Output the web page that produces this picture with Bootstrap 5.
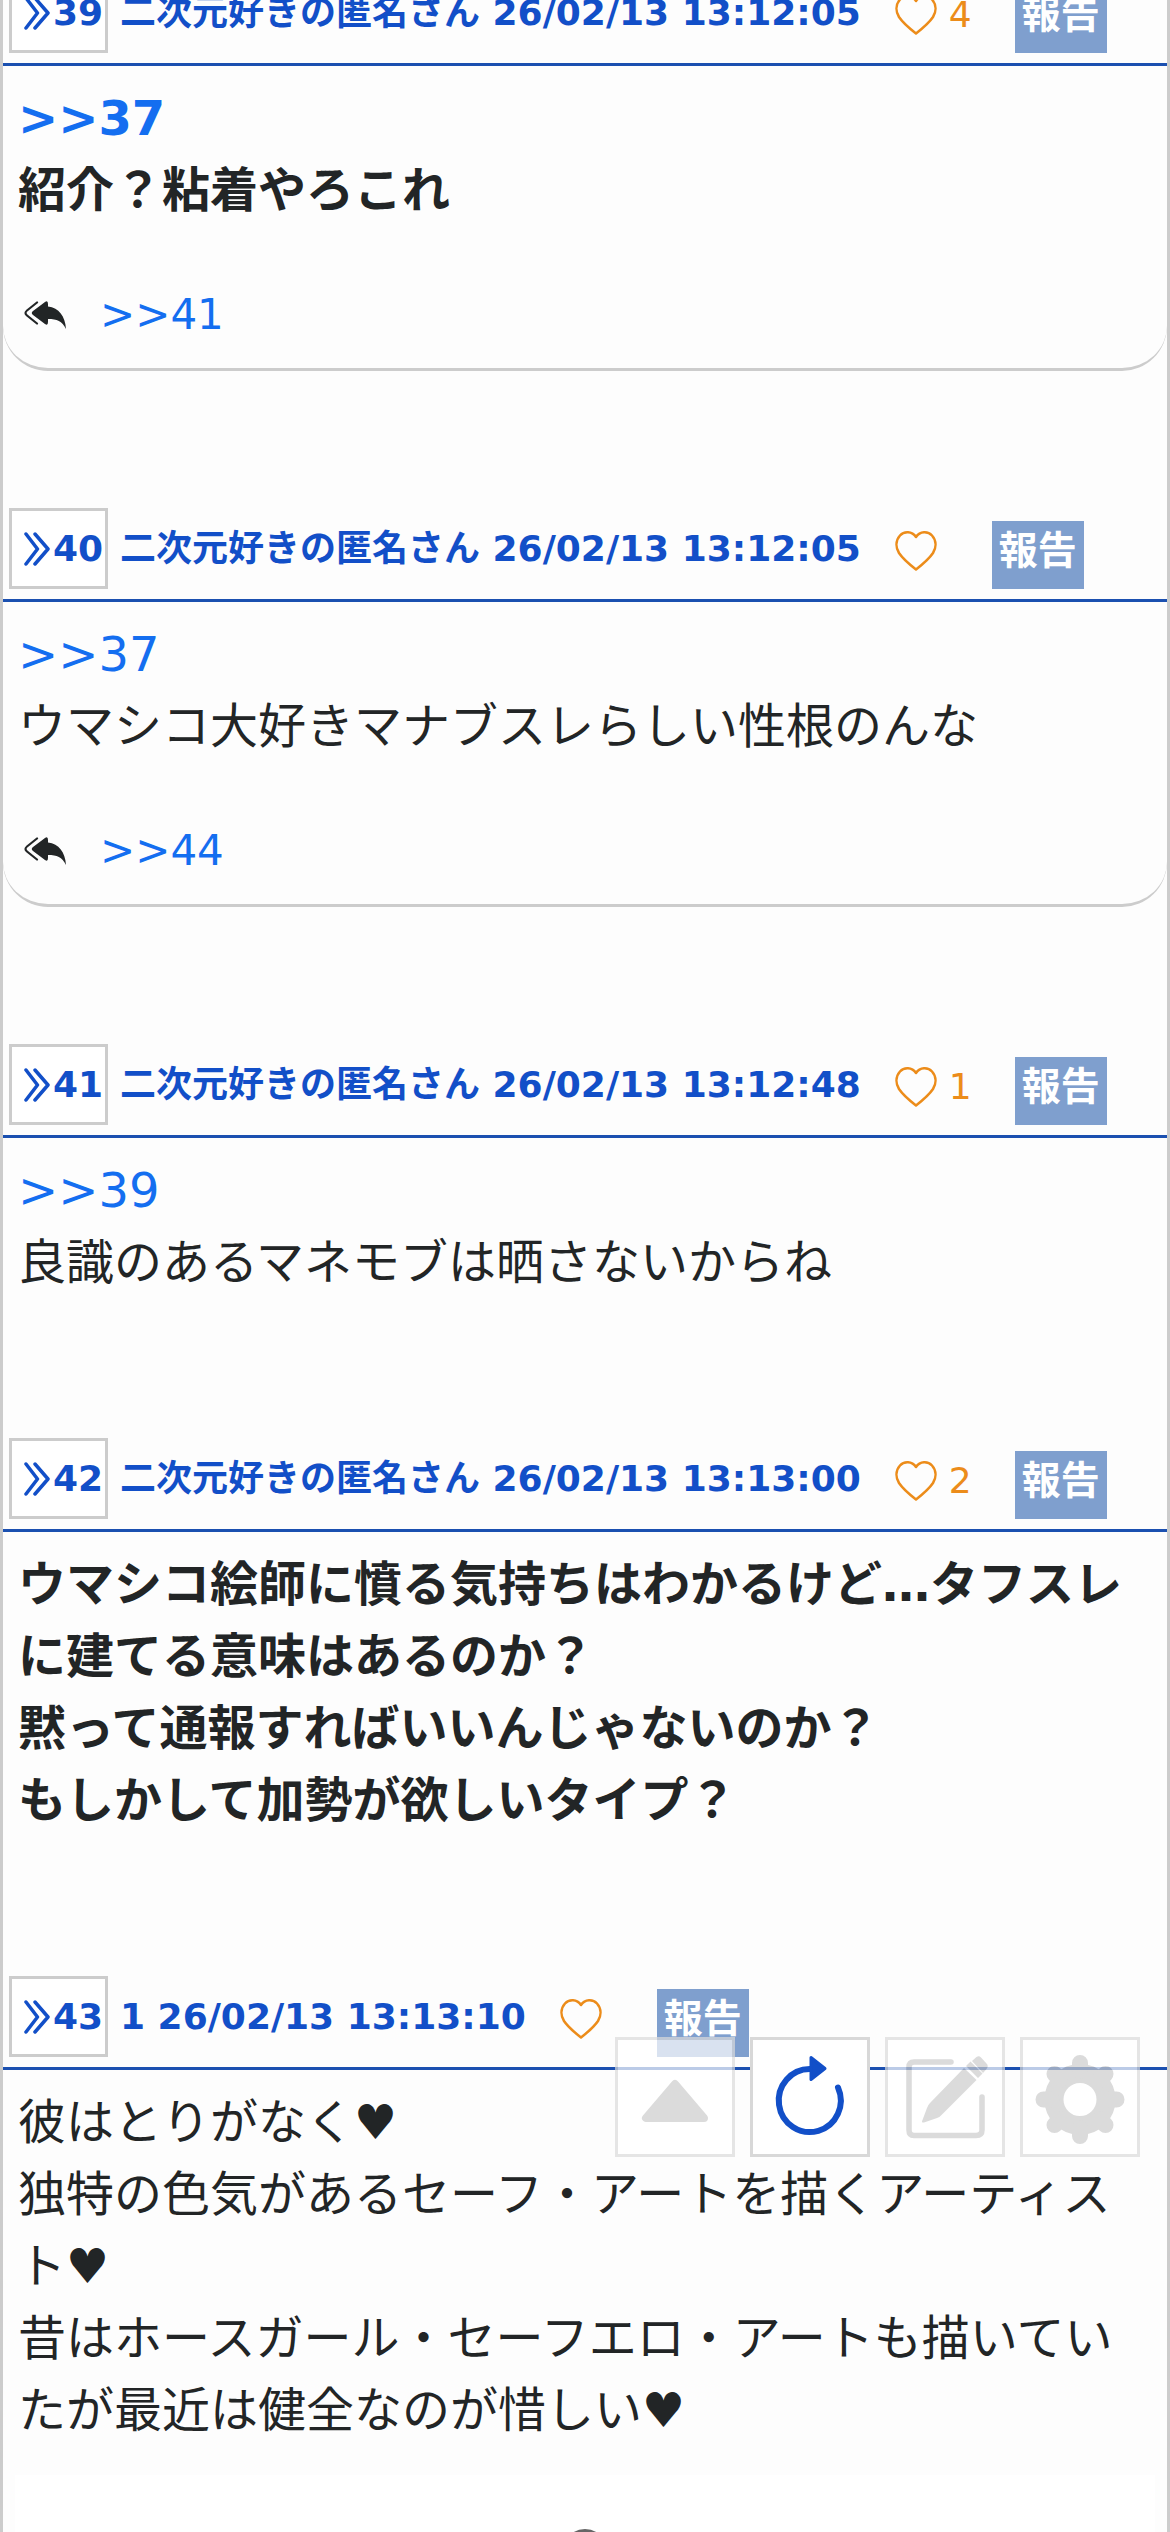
<!DOCTYPE html>
<html lang="ja">
<head>
<meta charset="utf-8">
<meta name="viewport" content="width=device-width, initial-scale=1">
<title>スレッド</title>
<link rel="stylesheet" href="https://cdn.jsdelivr.net/npm/bootstrap@5.3.0/dist/css/bootstrap.min.css">
<style>
  html { overflow: hidden; }
  body { background: #fdfdfd; color: #222526; font-family: "DejaVu Sans", "Noto Sans CJK JP", sans-serif; }
  .thread { border: solid #ccc; border-width: 0 3px; margin-top: -28px; }
  .post { margin-bottom: 137px; }
  .post-head { height: 94px; padding: 0 6px 10px; border-bottom: 3px solid #1b50b0; color: #124fc8; font-size: 36px; font-weight: 700; line-height: 81px; white-space: nowrap; }
  .post-no { width: 99px; height: 81px; border: 3px solid #ccc; background: #fff; color: inherit; font-weight: 700; padding: 0 0 0 12px; line-height: 75px; gap: 2px; }
  .post-meta { margin-left: 12px; }
  .like { margin-left: 34px; height: 81px; padding: 5px 0 0; border: 0; background: none; color: #ec8c1a; gap: 12px; line-height: 76px; }
  .like-empty { padding-right: 12px; }
  .report { margin-left: 43px; height: 68px; padding: 0 7px 8px; border: 0; background: #7f9fce; color: #fff; font-size: 39px; font-weight: 700; line-height: 60px; }
  .post-body { padding: 16px 15px 3px; font-size: 48px; line-height: 72px; }
  .post-body p { margin: 0; }
  .thread a { color: #146ef0; text-decoration: none; }
  .replied { border-bottom: 3px solid #ccc; border-radius: 0 0 45px 45px; padding-bottom: 22px; }
  .replies { margin-top: 57px; padding-left: 6px; gap: 34px; font-size: 42px; line-height: 63px; }
  .thumb { display: block; margin: 29px -3px 0; height: 240px; background: #fff; text-align: center; padding-top: 54px; line-height: 0; }
  .tools { right: 30px; bottom: 375px; gap: 15px; }
  .tool { width: 120px; height: 120px; padding: 0; border: 3px solid #dadada; background: #fff; color: #ccc; opacity: .7; }
  .tool-on { border-color: #d8d8d8; color: #124fc8; opacity: 1; }
  .tool svg { display: block; margin: -3px; }
</style>
<script src="https://cdn.jsdelivr.net/npm/bootstrap@5.3.0/dist/js/bootstrap.bundle.min.js"></script>
</head>
<body class="vh-100 overflow-hidden">
<svg class="d-none" xmlns="http://www.w3.org/2000/svg">
  <symbol id="chev" viewBox="0 0 27 34"><path d="M2 2 13.500 17 2 32M11 2 24 17 11 32" fill="none" stroke="currentColor" stroke-width="3.500" stroke-linecap="round" stroke-linejoin="round"/></symbol>
  <symbol id="heart" viewBox="0 0 42 40"><path d="M21 6C17 0 9 0 5 4.500C0 10 1 17 4 22C8 28 14 33 21 38.500C28 33 34 28 38 22C41 17 42 10 37 4.500C33 0 25 0 21 6Z" fill="none" stroke="currentColor" stroke-width="2.500" stroke-linejoin="round"/></symbol>
  <symbol id="reply" viewBox="0 0 42 28"><path d="M13 1.500 3 9.500Q0 12 3 14.500L13 22.500" fill="none" stroke="currentColor" stroke-width="2.200" stroke-linecap="round"/><path d="M9 10 21 1Q24-1 24 3V5.500C35 7 41 15 42 28C38 20 33 18 24 18V21Q24 25 21 23L9 14Q6.500 12 9 10Z" fill="currentColor"/></symbol>
</svg>

<main class="thread">
  <article class="post">
    <header class="post-head d-flex align-items-end">
      <button type="button" class="post-no d-flex align-items-center"><svg width="27" height="34"><use href="#chev"/></svg>39</button>
      <span class="post-meta">二次元好きの匿名さん 26/02/13 13:12:05</span>
      <button type="button" class="like d-flex align-items-center" aria-label="いいね"><svg width="42" height="40"><use href="#heart"/></svg>4</button>
      <button type="button" class="report">報告</button>
    </header>
    <div class="post-body replied">
      <p class="fw-bold"><a href="#p37">&gt;&gt;37</a><br>紹介？粘着やろこれ</p>
      <div class="replies d-flex align-items-center"><svg width="42" height="28"><use href="#reply"/></svg><a href="#p41">&gt;&gt;41</a></div>
    </div>
  </article>

  <article class="post">
    <header class="post-head d-flex align-items-end">
      <button type="button" class="post-no d-flex align-items-center"><svg width="27" height="34"><use href="#chev"/></svg>40</button>
      <span class="post-meta">二次元好きの匿名さん 26/02/13 13:12:05</span>
      <button type="button" class="like like-empty d-flex align-items-center" aria-label="いいね"><svg width="42" height="40"><use href="#heart"/></svg></button>
      <button type="button" class="report">報告</button>
    </header>
    <div class="post-body replied">
      <p><a href="#p37">&gt;&gt;37</a><br>ウマシコ大好きマナブスレらしい性根のんな</p>
      <div class="replies d-flex align-items-center"><svg width="42" height="28"><use href="#reply"/></svg><a href="#p44">&gt;&gt;44</a></div>
    </div>
  </article>

  <article class="post" id="p41">
    <header class="post-head d-flex align-items-end">
      <button type="button" class="post-no d-flex align-items-center"><svg width="27" height="34"><use href="#chev"/></svg>41</button>
      <span class="post-meta">二次元好きの匿名さん 26/02/13 13:12:48</span>
      <button type="button" class="like d-flex align-items-center" aria-label="いいね"><svg width="42" height="40"><use href="#heart"/></svg>1</button>
      <button type="button" class="report">報告</button>
    </header>
    <div class="post-body">
      <p><a href="#p39">&gt;&gt;39</a><br>良識のあるマネモブは晒さないからね</p>
    </div>
  </article>

  <article class="post">
    <header class="post-head d-flex align-items-end">
      <button type="button" class="post-no d-flex align-items-center"><svg width="27" height="34"><use href="#chev"/></svg>42</button>
      <span class="post-meta">二次元好きの匿名さん 26/02/13 13:13:00</span>
      <button type="button" class="like d-flex align-items-center" aria-label="いいね"><svg width="42" height="40"><use href="#heart"/></svg>2</button>
      <button type="button" class="report">報告</button>
    </header>
    <div class="post-body">
      <p class="fw-bold">ウマシコ絵師に憤る気持ちはわかるけど…タフスレに建てる意味はあるのか？<br>黙って通報すればいいんじゃないのか？<br>もしかして加勢が欲しいタイプ？</p>
    </div>
  </article>

  <article class="post">
    <header class="post-head d-flex align-items-end">
      <button type="button" class="post-no d-flex align-items-center"><svg width="27" height="34"><use href="#chev"/></svg>43</button>
      <span class="post-meta">1 26/02/13 13:13:10</span>
      <button type="button" class="like like-empty d-flex align-items-center" aria-label="いいね"><svg width="42" height="40"><use href="#heart"/></svg></button>
      <button type="button" class="report">報告</button>
    </header>
    <div class="post-body">
      <p>彼はとりがなく♥<br>独特の色気があるセーフ・アートを描くアーティスト♥<br>昔はホースガール・セーフエロ・アートも描いていたが最近は健全なのが惜しい♥</p>
      <a class="thumb" href="#image" aria-label="画像"><svg width="44" height="44" viewBox="0 0 44 44"><circle cx="22" cy="22" r="20.500" fill="#888" stroke="#666" stroke-width="3"/></svg></a>
    </div>
  </article>
</main>

<nav class="tools position-fixed d-flex" aria-label="操作">
  <button type="button" class="tool" aria-label="上へ"><svg width="120" height="120"><path d="M60 47 31 81H89Z" fill="currentColor" stroke="currentColor" stroke-width="8" stroke-linejoin="round"/></svg></button>
  <button type="button" class="tool tool-on" aria-label="更新"><svg width="120" height="120"><path d="M88 50.500A31 31.500 0 1 1 60 32" fill="none" stroke="currentColor" stroke-width="6" stroke-linecap="round"/><path d="M61 20.500 75 31.500 61 42.500Z" fill="currentColor" stroke="currentColor" stroke-width="3" stroke-linejoin="round"/></svg></button>
  <button type="button" class="tool" aria-label="書き込む"><svg width="120" height="120"><path d="M66 25H29Q24 25 24 30V93Q24 98.500 29 98.500H91Q97 98.500 97 93V60" fill="none" stroke="currentColor" stroke-width="5.500" stroke-linecap="round"/><path d="M79 31 91.500 43 57 77.500Q55 80 52 81L39 85.500Q36 86 37.500 83L42 71Q43 68 45 66ZM81 29 85.500 24.500 97.500 36.500 93 41ZM87 24 91.500 20Q94 18.500 96 20.500L101.500 26.500Q104 29 101.500 32L98 36Z" fill="currentColor"/></svg></button>
  <button type="button" class="tool" aria-label="設定"><svg width="120" height="120"><g fill="none" stroke="currentColor"><circle cx="60" cy="62.500" r="26" stroke-width="19"/><path d="M60 34V26M60 91V99M31.500 62.500H23.500M88.500 62.500H96.500M40 42.500 34.500 37M80 42.500 85.500 37M40 82.500 34.500 88M80 82.500 85.500 88" stroke-width="16" stroke-linecap="round"/></g></svg></button>
</nav>
</body>
</html>
